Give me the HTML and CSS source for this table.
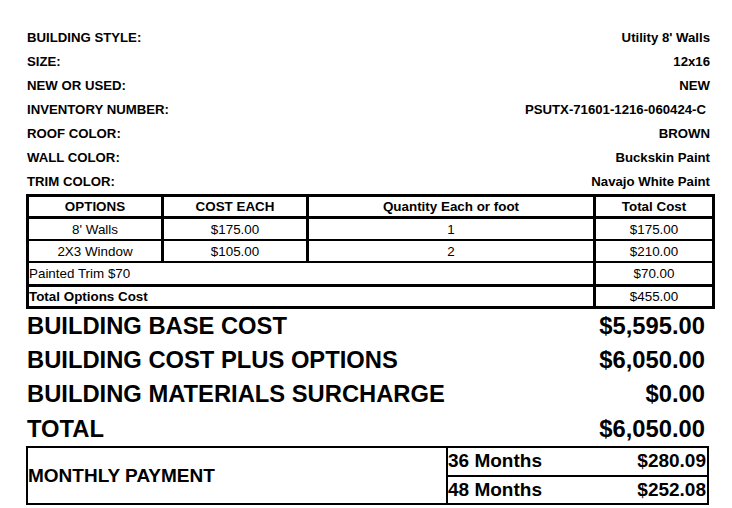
FILE: index.html
```html
<!DOCTYPE html>
<html>
<head>
<meta charset="utf-8">
<link rel="stylesheet" href="styles.css">
</head>
<body>
<div class="page">
  <div class="info">
    <div class="info-row"><span>BUILDING STYLE:</span><span>Utility 8' Walls</span></div>
    <div class="info-row"><span>SIZE:</span><span>12x16</span></div>
    <div class="info-row"><span>NEW OR USED:</span><span>NEW</span></div>
    <div class="info-row"><span>INVENTORY NUMBER:</span><span class="inv">PSUTX-71601-1216-060424-C</span></div>
    <div class="info-row"><span>ROOF COLOR:</span><span>BROWN</span></div>
    <div class="info-row"><span>WALL COLOR:</span><span>Buckskin Paint</span></div>
    <div class="info-row"><span>TRIM COLOR:</span><span>Navajo White Paint</span></div>
  </div>

  <table class="options">
    <colgroup>
      <col class="c1"><col class="c2"><col class="c3"><col class="c4">
    </colgroup>
    <thead>
      <tr class="head">
        <th>OPTIONS</th><th>COST EACH</th><th>Quantity Each or foot</th><th>Total Cost</th>
      </tr>
    </thead>
    <tbody>
      <tr class="item"><td>8' Walls</td><td>$175.00</td><td>1</td><td>$175.00</td></tr>
      <tr class="item"><td>2X3 Window</td><td>$105.00</td><td>2</td><td>$210.00</td></tr>
      <tr class="extra"><td colspan="3" class="left">Painted Trim $70</td><td>$70.00</td></tr>
      <tr class="sum"><td colspan="3" class="left bold">Total Options Cost</td><td>$455.00</td></tr>
    </tbody>
  </table>

  <div class="totals">
    <div class="total-row"><span>BUILDING BASE COST</span><span>$5,595.00</span></div>
    <div class="total-row"><span>BUILDING COST PLUS OPTIONS</span><span>$6,050.00</span></div>
    <div class="total-row"><span>BUILDING MATERIALS SURCHARGE</span><span>$0.00</span></div>
    <div class="total-row grand"><span>TOTAL</span><span>$6,050.00</span></div>
  </div>

  <div class="monthly">
    <div class="monthly-label">MONTHLY PAYMENT</div>
    <div class="monthly-terms">
      <div class="term first"><span>36 Months</span><span>$280.09</span></div>
      <div class="term"><span>48 Months</span><span>$252.08</span></div>
    </div>
  </div>
</div>
</body>
</html>
```

FILE: styles.css
```css
html, body {
  margin: 0;
  padding: 0;
  background: #fff;
}

body {
  font-family: "Liberation Sans", Arial, sans-serif;
  color: #000;
  width: 732px;
  height: 508px;
  overflow: hidden;
}

.page {
  display: flex;
  flex-direction: column;
}

.info {
  padding: 26px 22px 0 27px;
  display: flex;
  flex-direction: column;
}

.info-row {
  display: flex;
  justify-content: space-between;
  height: 24px;
  line-height: 24px;
  font-size: 13.2px;
  font-weight: bold;
}

.inv {
  margin-right: 4px;
}

.options {
  margin-left: 26px;
  width: 686px;
  border-collapse: collapse;
  table-layout: fixed;
  border: 3px solid #000;
  font-size: 13.4px;
}

.c1 { width: 135px; }
.c2 { width: 145px; }
.c3 { width: 287px; }
.c4 { width: 119px; }

.options th,
.options td {
  padding: 0;
  text-align: center;
  line-height: 15px;
  border-left: 3px solid #000;
  border-right: 3px solid #000;
  border-bottom: 2px solid #000;
}

.options th {
  font-weight: bold;
  height: 19px;
  border-bottom: 3px solid #000;
}

.item td {
  height: 20px;
}

.extra td {
  height: 21px;
  border-bottom: 3px solid #000;
}

.sum td {
  height: 19px;
  border-bottom: 3px solid #000;
}

.options td.left {
  text-align: left;
  padding-left: 0;
}

.options td.bold {
  font-weight: bold;
}

.totals {
  padding: 0 27px 0 27px;
  display: flex;
  flex-direction: column;
}

.total-row {
  display: flex;
  justify-content: space-between;
  height: 34px;
  line-height: 34px;
  font-size: 23.75px;
  font-weight: bold;
}

.total-row.grand {
  margin-top: 1px;
}

.monthly {
  margin-left: 26px;
  width: 683px;
  height: 59px;
  box-sizing: border-box;
  border: 2px solid #000;
  display: flex;
  font-weight: bold;
  font-size: 19px;
}

.monthly-label {
  flex: 1;
  display: flex;
  align-items: center;
  padding-left: 0;
}

.monthly-terms {
  width: 259px;
  border-left: 2px solid #000;
  display: flex;
  flex-direction: column;
}

.term {
  flex: 1;
  display: flex;
  justify-content: space-between;
  align-items: center;
  padding-left: 0;
  padding-right: 1px;
}

.term.first {
  border-bottom: 2px solid #000;
}
```
